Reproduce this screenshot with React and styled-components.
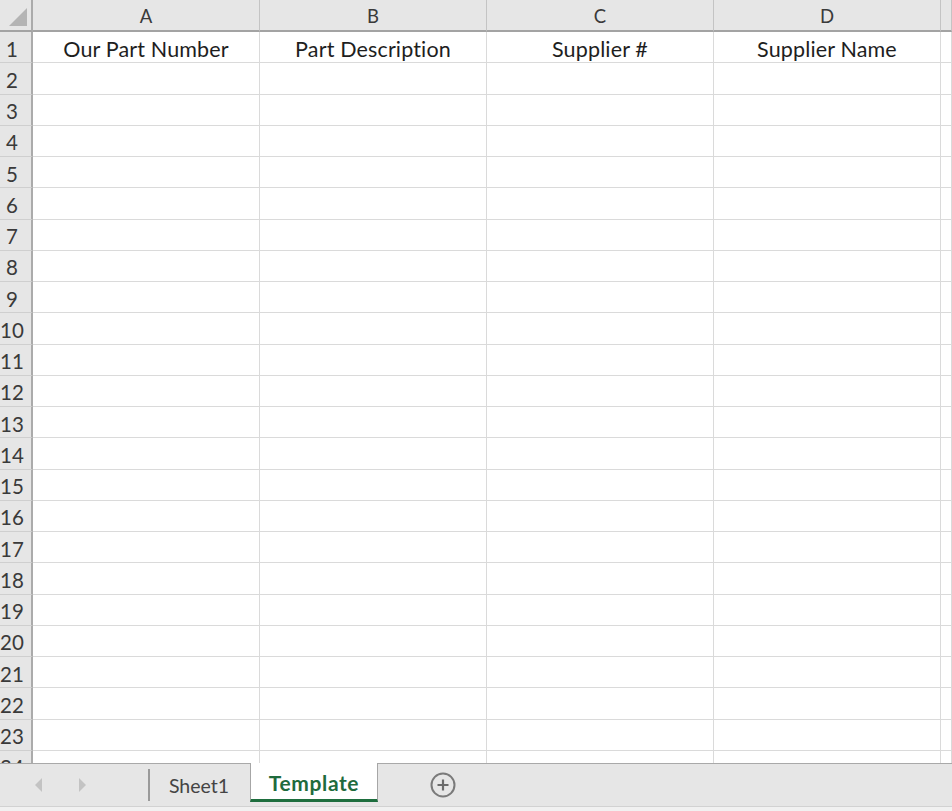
import React from "react";
import styled, { createGlobalStyle } from "styled-components";

const Global = createGlobalStyle`
  html, body { margin: 0; padding: 0; background: #fff; }
  body { font-family: Lato, "Open Sans", sans-serif; font-variant-ligatures: none; }
  #root { width: 952px; height: 811px; overflow: hidden; }
`;

const Window = styled.div`
  width: 952px;
  height: 811px;
  display: flex;
  flex-direction: column;
  overflow: hidden;
  background: #fff;
`;

const SheetArea = styled.div`
  flex: 1;
  overflow: hidden;
  min-height: 0;
`;

const Grid = styled.div`
  display: grid;
  grid-template-columns: 33px repeat(4, 227px) 1fr;
  grid-template-rows: 32px repeat(24, 31.25px);
`;

const Corner = styled.div`
  background: #e6e6e6;
  border-right: 2px solid #ababab;
  border-bottom: 2px solid #a3a3a3;
  box-sizing: border-box;
  display: flex;
  align-items: flex-end;
  justify-content: flex-end;
  padding: 0 4px 4px 0;
`;

const Triangle = styled.div`
  width: 18px;
  height: 18px;
  background: #b4b4b4;
  clip-path: polygon(100% 0, 100% 100%, 0 100%);
`;

const ColHead = styled.div`
  background: #e6e6e6;
  border-right: 1px solid #c4c4c4;
  border-bottom: 2px solid #a3a3a3;
  box-sizing: border-box;
  display: flex;
  align-items: center;
  justify-content: center;
  font-family: Lato, sans-serif;
  font-size: 18.5px;
  color: #3a3a3a;
  padding-top: 2px;
`;

const RowHead = styled.div`
  background: #e6e6e6;
  border-right: 2px solid #ababab;
  border-bottom: 1px solid #cfcfcf;
  box-sizing: border-box;
  display: flex;
  align-items: center;
  justify-content: center;
  padding-right: 7px;
  padding-top: 3px;
  font-family: Lato, sans-serif;
  font-size: 20.5px;
  color: #3a3a3a;
  overflow: hidden;
`;

const Cell = styled.div`
  border-right: 1px solid #dadada;
  border-bottom: 1px solid #dadada;
  box-sizing: border-box;
  display: flex;
  align-items: flex-end;
  justify-content: center;
  padding-bottom: 0px;
  font-family: Lato, sans-serif;
  font-size: 21.5px;
  letter-spacing: 0.15px;
  color: #1e1e1e;
  white-space: nowrap;
  overflow: hidden;
`;

const TabBar = styled.div`
  height: 48px;
  flex: none;
  box-sizing: border-box;
  border-top: 1px solid #a9a9a9;
  background: #e6e6e6;
  display: flex;
  flex-direction: column;
`;

const TabRow = styled.div`
  height: 42px;
  display: flex;
  align-items: stretch;
`;

const TabFoot = styled.div`
  flex: 1;
  border-top: 1px solid #d2d2d2;
  background: #f1f1f1;
`;

const Nav = styled.div`
  width: 148px;
  display: flex;
  align-items: center;
  padding-left: 35px;
  gap: 37px;
  box-sizing: border-box;
`;

const Arrow = styled.div`
  width: 0;
  height: 0;
  border-top: 7px solid transparent;
  border-bottom: 7px solid transparent;
  ${(p) =>
    p.$dir === "left"
      ? "border-right: 7px solid #c3c3c3;"
      : "border-left: 7px solid #c3c3c3;"}
`;

const Separator = styled.div`
  width: 2px;
  background: #9a9a9a;
  margin: 5px 0 5px;
`;

const Tab = styled.div`
  box-sizing: border-box;
  width: ${(p) => p.$w}px;
  display: flex;
  align-items: center;
  justify-content: center;
  font-family: Lato, sans-serif;
  font-size: 19.5px;
  color: #444;
  padding-top: 1px;
  padding-right: 2px;
`;

const ActiveTab = styled.div`
  box-sizing: border-box;
  width: 128px;
  margin-top: -1px;
  margin-bottom: 4px;
  background: #fff;
  border-left: 1px solid #a6a6a6;
  border-right: 1px solid #a6a6a6;
  border-bottom: 3px solid #1e6e3e;
  display: flex;
  align-items: center;
  justify-content: center;
  font-family: Lato, sans-serif;
  font-weight: 700;
  font-size: 21px;
  letter-spacing: 0.6px;
  color: #1f6b3d;
  padding-top: 2px;
`;

const AddWrap = styled.div`
  width: 130px;
  display: flex;
  align-items: center;
  justify-content: center;
`;

const cols = ["A", "B", "C", "D", ""];
const headers = ["Our Part Number", "Part Description", "Supplier #", "Supplier Name", ""];

export default function App() {
  const rows = [];
  for (let r = 1; r <= 24; r++) {
    rows.push(<RowHead key={`h${r}`}>{r}</RowHead>);
    for (let c = 0; c < 5; c++) {
      rows.push(<Cell key={`${r}-${c}`}>{r === 1 ? headers[c] : ""}</Cell>);
    }
  }
  return (
    <>
      <Global />
      <Window>
        <SheetArea>
          <Grid>
            <Corner>
              <Triangle />
            </Corner>
            {cols.map((c, i) => (
              <ColHead key={i}>{c}</ColHead>
            ))}
            {rows}
          </Grid>
        </SheetArea>
        <TabBar>
          <TabRow>
            <Nav>
              <Arrow $dir="left" />
              <Arrow $dir="right" />
            </Nav>
            <Separator />
            <Tab $w={100}>Sheet1</Tab>
            <ActiveTab>Template</ActiveTab>
            <AddWrap>
              <svg width="28" height="28" viewBox="0 0 28 28">
                <circle cx="14" cy="14" r="11.5" fill="none" stroke="#7a7a7a" strokeWidth="2" />
                <path d="M14 8.5v11M8.5 14h11" stroke="#6a6a6a" strokeWidth="2.2" />
              </svg>
            </AddWrap>
          </TabRow>
          <TabFoot />
        </TabBar>
      </Window>
    </>
  );
}
